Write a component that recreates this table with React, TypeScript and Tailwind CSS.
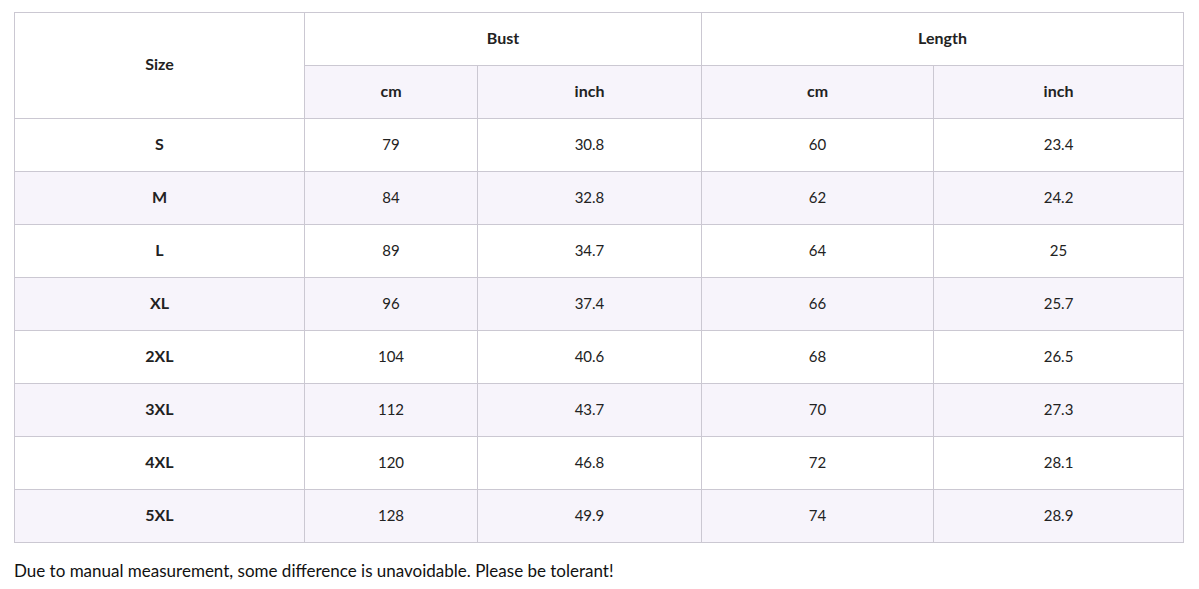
import React from 'react';

const rows = [
  ['S', '79', '30.8', '60', '23.4'],
  ['M', '84', '32.8', '62', '24.2'],
  ['L', '89', '34.7', '64', '25'],
  ['XL', '96', '37.4', '66', '25.7'],
  ['2XL', '104', '40.6', '68', '26.5'],
  ['3XL', '112', '43.7', '70', '27.3'],
  ['4XL', '120', '46.8', '72', '28.1'],
  ['5XL', '128', '49.9', '74', '28.9'],
];

const cell = 'border border-[#cbc8d2] text-center align-middle p-0 pb-[2px]';

export default function App() {
  return (
    <div className="bg-white min-h-[589px] px-[14px] pt-[12px] text-[#222] font-['Lato','Noto_Sans',sans-serif]">
      <table className="border-collapse table-fixed w-[1169px]">
        <colgroup>
          <col className="w-[290px]" />
          <col className="w-[173px]" />
          <col className="w-[224px]" />
          <col className="w-[232px]" />
          <col className="w-[250px]" />
        </colgroup>
        <thead>
          <tr className="h-[53px]">
            <th rowSpan={2} className={`${cell} pb-[4px] text-[16px] font-bold bg-white`}>Size</th>
            <th colSpan={2} className={`${cell} text-[16px] font-bold bg-white`}>Bust</th>
            <th colSpan={2} className={`${cell} text-[16px] font-bold bg-white`}>Length</th>
          </tr>
          <tr className="h-[53px] bg-[#f7f4fb]">
            <th className={`${cell} text-[16px] font-bold`}>cm</th>
            <th className={`${cell} text-[16px] font-bold`}>inch</th>
            <th className={`${cell} text-[16px] font-bold`}>cm</th>
            <th className={`${cell} text-[16px] font-bold`}>inch</th>
          </tr>
        </thead>
        <tbody>
          {rows.map((r, i) => (
            <tr key={r[0]} className={`h-[53px] ${i % 2 === 1 ? 'bg-[#f7f4fb]' : 'bg-white'}`}>
              <td className={`${cell} text-[16px] font-bold`}>{r[0]}</td>
              {r.slice(1).map((v, j) => (
                <td key={j} className={`${cell} text-[15px]`}>{v}</td>
              ))}
            </tr>
          ))}
        </tbody>
      </table>
      <p className="mt-[15px] text-[17px] text-[#111]">
        Due to manual measurement, some difference is unavoidable. Please be tolerant!
      </p>
    </div>
  );
}
